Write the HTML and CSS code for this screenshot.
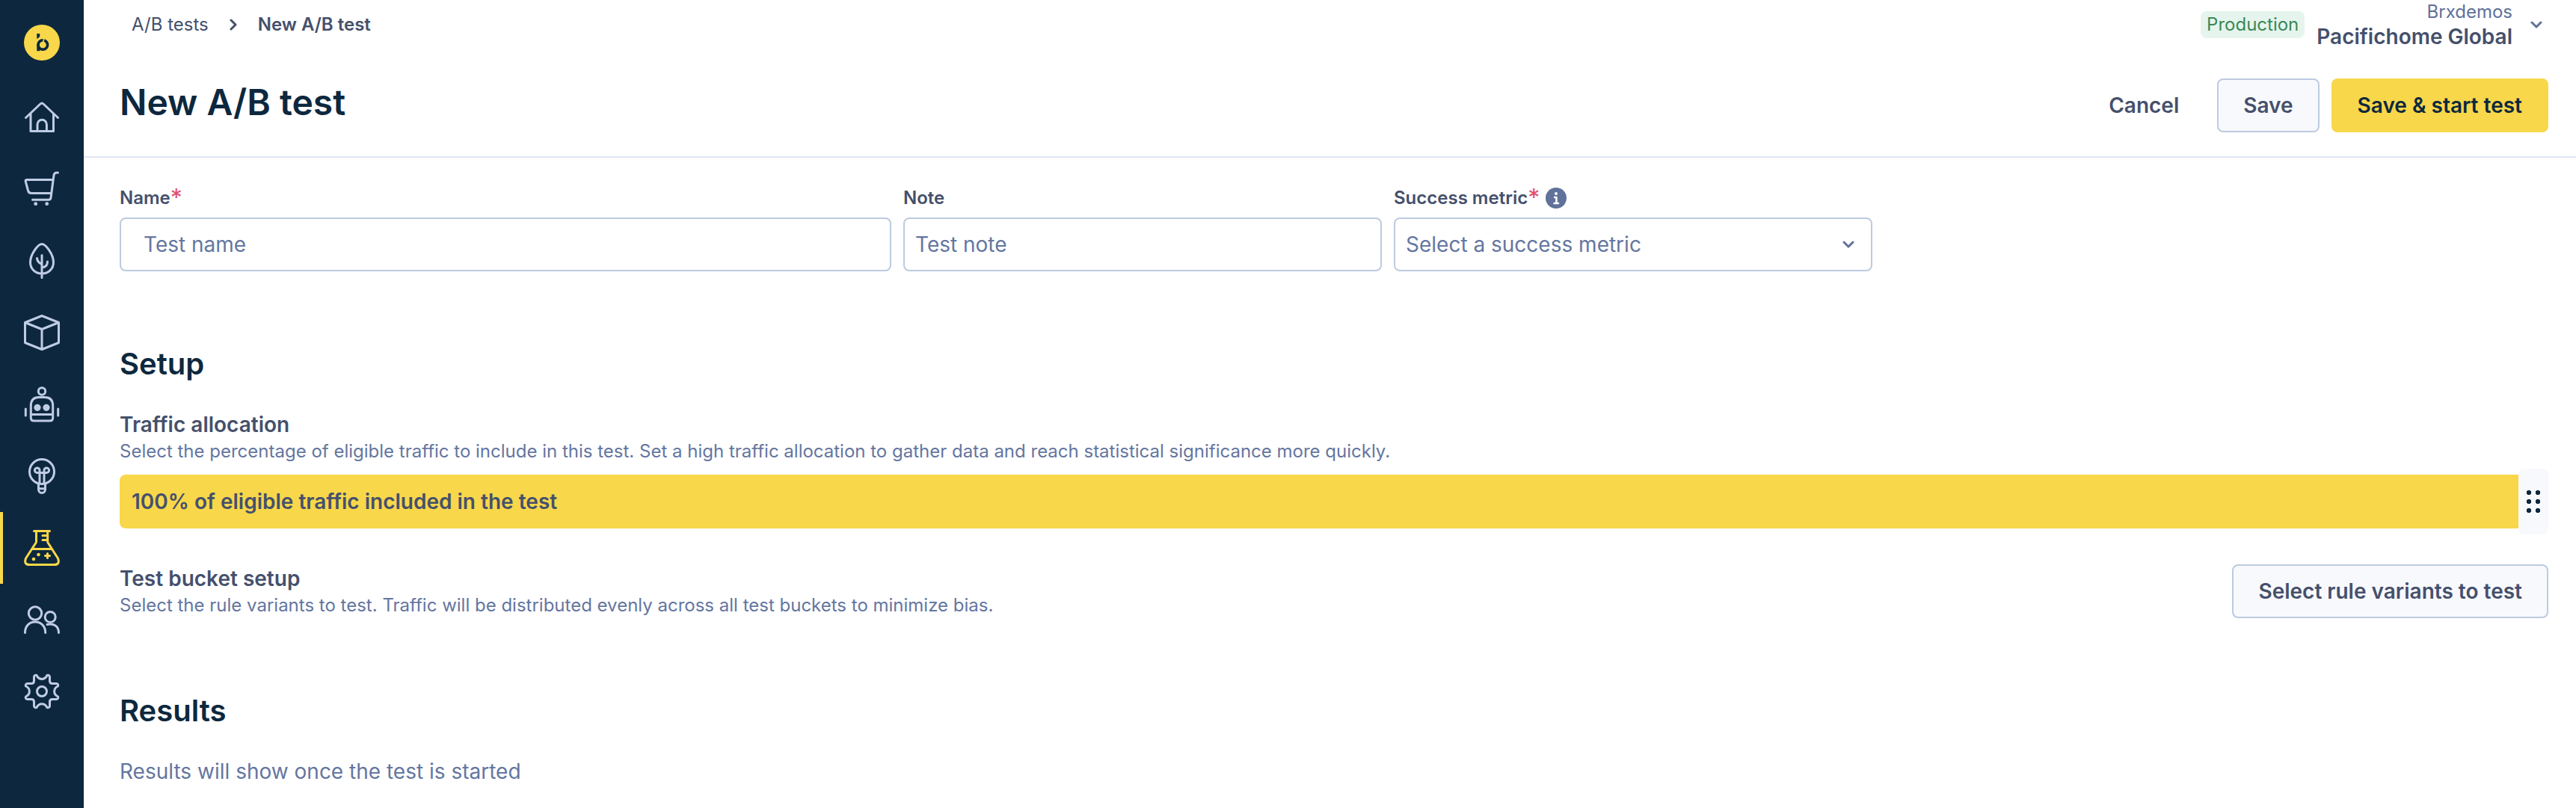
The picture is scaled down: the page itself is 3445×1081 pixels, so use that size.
FILE: index.html
```html
<!DOCTYPE html>
<html lang="en">
<head>
    <meta charset="UTF-8">
    <meta name="viewport" content="width=device-width, initial-scale=1.0">
    <title>New A/B test</title>
    <link rel="stylesheet" href="styles.css">
</head>
<body>

<nav class="sidebar" aria-label="Main">
    <a class="logo" href="#" aria-label="Dashboard">
        <svg viewBox="0 0 48 48">
            <circle cx="24" cy="24" r="24" fill="#f8d74a"/>
            <path d="M17.3 12h3.9v3.2q0 1.8-3.9 3.8z" fill="#0d283e"/>
            <path d="M17.3 27v8.2h3.9V27z" fill="#0d283e"/>
            <circle cx="25.3" cy="27" r="6.2" fill="none" stroke="#0d283e" stroke-width="3.8"/>
            <path d="M25 27l2-9.500" stroke="#f8d74a" stroke-width="1.600"/>
            <circle cx="25.3" cy="27" r="4.3" fill="#f8d74a"/>
        </svg>
    </a>
    <a class="nav-item" href="#" aria-label="Home">
        <svg viewBox="0 0 48 48">
            <path d="M2.500 24.500L22 6q2-2 4 0l19.500 18.500M9 19v23.500h30.500V19M18 42V33.500a6.200 6.200 0 0 1 12.400 0V42"/>
        </svg>
    </a>
    <a class="nav-item" href="#" aria-label="Commerce">
        <svg viewBox="0 0 48 48">
            <path d="M45.500 2h-1.500q-3.500 0-4 3.500L36 35.500q-.4 2.800-3 2.800H11.500M39 11.500H4q-2.200 0-1.800 2.200L5.500 26q1 3.500 4.500 3.500h26"/>
            <circle class="dot" cx="15.700" cy="43.700" r="2.400"/>
            <circle class="dot" cx="30.700" cy="43.700" r="2.400"/>
        </svg>
    </a>
    <a class="nav-item" href="#" aria-label="Discover">
        <svg viewBox="0 0 48 48">
            <path d="M24 1.500C19 1.500 8.500 15 8.500 26c0 9 7 15 15.500 15s15.500-6 15.500-15C39.500 15 29 1.500 24 1.500zM24 16.500v30M17.500 20.500q.5 5.500 6.500 8M31.500 25q0 7-7.500 8"/>
        </svg>
    </a>
    <a class="nav-item" href="#" aria-label="Products">
        <svg viewBox="0 0 48 48">
            <path d="M24 1.500l22.500 9v27l-22.500 9-22.500-9v-27zM1.500 10.500l22.500 9 22.500-9M24 19.500v27"/>
        </svg>
    </a>
    <a class="nav-item" href="#" aria-label="Assistant">
        <svg viewBox="0 0 48 48">
            <circle cx="24" cy="6.500" r="4.700"/>
            <path d="M20 14.500h8q10.700 0 10.700 11.500v16q0 4-4 4H13.300q-4 0-4-4V26q0-11.500 10.700-11.500zM9.300 37.500h29.400M2.300 30v9M45.700 30v9"/>
            <circle class="dot" cx="18" cy="28.300" r="4.600"/>
            <circle class="dot" cx="30" cy="28.300" r="4.600"/>
        </svg>
    </a>
    <a class="nav-item" href="#" aria-label="Insights">
        <svg viewBox="0 0 48 48">
            <circle cx="24" cy="18" r="16.500"/>
            <path d="M21 19.500h-3a3.300 3.300 0 1 1 3-3.300V34M27 34V16.200a3.300 3.300 0 1 1 3 3.300h-9M19.500 34v8a4.500 4.500 0 0 0 9 0v-8M19.500 40.800h9"/>
        </svg>
    </a>
    <a class="nav-item active" href="#" aria-label="A/B tests">
        <svg viewBox="0 0 48 48">
            <path d="M13.500 1.500h21M16.500 1.500v14q0 1.500-1 2.500L2.500 38q-3 8.500 5 8.500h33q8 0 5-8.500L32.700 18q-1-1-1-2.500v-14M11 25.500h26M25 7.500h6.500M25 13.500h6.500M31.500 31.500v6M28.500 34.500h6"/>
            <circle class="dot" cx="19.500" cy="33" r="2.300"/>
            <circle class="dot" cx="13" cy="39" r="2.300"/>
        </svg>
    </a>
    <a class="nav-item" href="#" aria-label="Audience">
        <svg viewBox="0 0 48 48">
            <circle cx="15" cy="15.500" r="8.700"/>
            <path d="M1.500 41.500C1.500 32 8 27 15 27s13.700 5 13.700 14.500M31 30.500c9-2 15.500 2.500 15.500 11"/>
            <circle cx="35.200" cy="20.500" r="7"/>
        </svg>
    </a>
    <a class="nav-item" href="#" aria-label="Settings">
        <svg viewBox="0 0 48 48">
            <path d="M13.500 4.500Q14 1.500 17 2.500C20 9 28 9 31 2.500q3-1 3.500 2V10q0 3.500 3.500 3.500h5.500q3 .5 2 3.500c-6.500 3-6.500 11 0 14q1 3-2 3.500H38q-3.500 0-3.500 3.500v5.500q-.5 3-3.500 2c-3-6.500-11-6.500-14 0q-3 1-3.500-2V38q0-3.500-3.500-3.500H4.500q-3-.5-2-3.500c6.500-3 6.500-11 0-14q-1-3 2-3.500H10q3.500 0 3.500-3.500z"/>
            <circle cx="24" cy="24" r="6.500"/>
        </svg>
    </a>
</nav>

<div class="page">
    <header class="header">
        <div class="topbar">
            <div class="breadcrumb">
                <a href="#">A/B tests</a>
                <svg class="chevron-right" viewBox="0 0 12 16"><path d="M3 2l6 6-6 6"/></svg>
                <span class="current">New A/B test</span>
            </div>
            <div class="account">
                <span class="badge">Production</span>
                <button class="account-switch" type="button">
                    <span class="account-name">
                        <span class="org">Brxdemos</span>
                        <span class="site">Pacifichome Global</span>
                    </span>
                    <svg class="chevron-down" viewBox="0 0 16 12"><path d="M2 3l6 6 6-6"/></svg>
                </button>
            </div>
        </div>
        <div class="title-row">
            <h1>New A/B test</h1>
            <div class="actions">
                <button class="btn btn-text" type="button">Cancel</button>
                <button class="btn" type="button">Save</button>
                <button class="btn btn-primary" type="button">Save &amp; start test</button>
            </div>
        </div>
    </header>

    <main class="content">
        <form class="details">
            <div class="field">
                <div class="field-label">
                    <label for="test-name">Name</label><span class="required">*</span>
                </div>
                <input class="wide-pad" type="text" id="test-name" placeholder="Test name">
            </div>
            <div class="field">
                <div class="field-label">
                    <label for="test-note">Note</label>
                </div>
                <input type="text" id="test-note" placeholder="Test note">
            </div>
            <div class="field">
                <div class="field-label">
                    <label for="metric">Success metric</label><span class="required">*</span>
                    <svg class="info" viewBox="0 0 28 28">
                        <circle cx="14" cy="14" r="14" fill="#60719a"/>
                        <circle cx="14" cy="8" r="2" fill="#fff"/>
                        <path d="M12 13h2.500v8M11.500 21h5.500" fill="none" stroke="#fff" stroke-width="2.500" stroke-linecap="round" stroke-linejoin="round"/>
                    </svg>
                </div>
                <div class="select">
                    <select id="metric">
                        <option>Select a success metric</option>
                    </select>
                    <svg class="chevron-down" viewBox="0 0 16 12"><path d="M2 3l6 6 6-6"/></svg>
                </div>
            </div>
        </form>

        <section>
            <h2>Setup</h2>
            <h3><label for="allocation">Traffic allocation</label></h3>
            <p class="hint">Select the percentage of eligible traffic to include in this test. Set a high traffic allocation to gather data and reach statistical significance more quickly.</p>
            <div class="allocation" id="allocation-bar">
                <input type="range" id="allocation" min="0" max="100" value="100" oninput="updateAllocation()">
                <span class="allocation-text"><span id="allocation-value">100</span>% of eligible traffic included in the test</span>
            </div>
            <div class="bucket">
                <div>
                    <h3>Test bucket setup</h3>
                    <p class="hint">Select the rule variants to test. Traffic will be distributed evenly across all test buckets to minimize bias.</p>
                </div>
                <button class="btn" type="button">Select rule variants to test</button>
            </div>
        </section>

        <section>
            <h2>Results</h2>
            <p class="empty">Results will show once the test is started</p>
        </section>
    </main>
</div>

<script>
    function updateAllocation() {
        const value = document.getElementById('allocation').value;
        document.getElementById('allocation-value').innerText = value;
        document.getElementById('allocation-bar').style.setProperty('--fill', value + '%');
    }
</script>

</body>
</html>
```

FILE: styles.css
```css
* {
    box-sizing: border-box;
}
body {
    margin: 0;
    min-height: 100vh;
    display: flex;
    background: #fff;
    color: #45506c;
    font-family: Inter, "Liberation Sans", sans-serif;
    font-size: 28px;
    line-height: 34px;
}
h1, h2, h3, p {
    margin: 0;
}
a {
    color: inherit;
    text-decoration: none;
}
button, input, select {
    font: inherit;
    color: inherit;
}
svg {
    display: block;
    flex: none;
}

/* Sidebar */
.sidebar {
    flex: none;
    width: 112px;
    background: #0d283e;
}
.sidebar svg {
    width: 48px;
    height: 48px;
}
.logo {
    display: flex;
    justify-content: center;
    padding: 33px 0 28px;
}
.nav-item {
    display: flex;
    align-items: center;
    justify-content: center;
    height: 96px;
    color: #bfcce3;
}
.nav-item svg {
    fill: none;
    stroke: currentColor;
    stroke-width: 3;
    stroke-linecap: round;
    stroke-linejoin: round;
}
.nav-item .dot {
    fill: currentColor;
    stroke: none;
}
.nav-item.active {
    color: #f8d74a;
    box-shadow: inset 4px 0 #f8d74a;
}

/* Header */
.page {
    flex: 1;
    min-width: 0;
}
.header {
    padding: 0 37px 32px 48px;
    border-bottom: 2px solid #e1e6f2;
}
.topbar {
    display: flex;
    align-items: center;
    justify-content: space-between;
    padding-left: 16px;
}
.breadcrumb {
    display: flex;
    align-items: center;
    font-size: 24px;
}
.breadcrumb .current {
    font-weight: 600;
}
.chevron-right {
    width: 12px;
    height: 16px;
    margin: 0 27px;
}
.chevron-down {
    width: 16px;
    height: 12px;
}
.chevron-right, .chevron-down {
    fill: none;
    stroke: #60719a;
    stroke-width: 3;
    stroke-linecap: round;
    stroke-linejoin: round;
}
.chevron-right {
    stroke: #45506c;
}
.account {
    display: flex;
    align-items: center;
    gap: 16px;
}
.badge {
    padding: 0 8px;
    border-radius: 8px;
    background: #e5f5ed;
    color: #3b8757;
    font-size: 24px;
    line-height: 36px;
}
.account-switch {
    display: flex;
    align-items: center;
    gap: 24px;
    padding: 0 8px 0 0;
    border: none;
    background: none;
    text-align: right;
    cursor: pointer;
}
.account-name {
    display: flex;
    flex-direction: column;
}
.org {
    color: #60719a;
    font-size: 24px;
    line-height: 32px;
}
.site {
    font-weight: 600;
}
.title-row {
    display: flex;
    justify-content: space-between;
    margin-top: 39px;
}
h1 {
    color: #0d283e;
    font-size: 48px;
    line-height: 64px;
    font-weight: 600;
}
.actions {
    display: flex;
    gap: 16px;
}
.btn {
    flex: none;
    height: 72px;
    padding: 0 33px;
    border: 2px solid #bccbe0;
    border-radius: 8px;
    background: #f8f9fd;
    font-weight: 600;
    cursor: pointer;
}
.btn-text {
    border-color: transparent;
    background: none;
}
.btn-primary {
    border-color: #f8d74a;
    background: #f8d74a;
    color: #0d283e;
}

/* Content */
.content {
    padding: 36px 37px 32px 48px;
}
.details {
    display: grid;
    grid-template-columns: 1032fr 640fr 640fr;
    gap: 16px;
    max-width: 2344px;
}
.field-label {
    display: flex;
    align-items: center;
    height: 36px;
    margin-bottom: 8px;
    font-size: 24px;
    font-weight: 600;
}
.required {
    color: #e0506e;
    font-size: 32px;
    font-weight: 400;
}
.info {
    width: 28px;
    height: 28px;
    margin-left: 8px;
}
.field input, .field select {
    display: block;
    width: 100%;
    height: 72px;
    padding: 0 14px;
    border: 2px solid #bccbe0;
    border-radius: 8px;
    background: #fff;
    color: #6476a0;
}
.field input.wide-pad {
    padding: 0 30px;
}
.field input::placeholder {
    color: #6476a0;
    opacity: 1;
}
.select {
    position: relative;
}
.select select {
    appearance: none;
}
.select .chevron-down {
    position: absolute;
    top: 30px;
    right: 24px;
    pointer-events: none;
}
h2 {
    margin: 100px 0 40px;
    color: #0d283e;
    font-size: 40px;
    line-height: 48px;
    font-weight: 600;
}
h3 {
    font-size: 28px;
    font-weight: 600;
}
.hint {
    margin-top: 2px;
    color: #6476a0;
    font-size: 24px;
}
.empty {
    color: #6476a0;
}

/* Traffic slider */
.allocation {
    --fill: 100%;
    position: relative;
    margin: 6px 0 40px;
}
.allocation input {
    appearance: none;
    display: block;
    width: 100%;
    height: 88px;
    margin: 0;
    background: none;
    cursor: pointer;
}
.allocation input::-webkit-slider-runnable-track {
    height: 72px;
    border-radius: 8px;
    background: linear-gradient(to right, #f8d74a var(--fill), #e1e6f2 var(--fill));
}
.allocation input::-webkit-slider-thumb {
    appearance: none;
    width: 40px;
    height: 88px;
    margin-top: -8px;
    border-radius: 8px;
    background: radial-gradient(circle, #0d283e 3px, transparent 3px) 8px 26px / 12px 12px no-repeat,
        radial-gradient(circle, #0d283e 3px, transparent 3px) 20px 26px / 12px 12px no-repeat,
        radial-gradient(circle, #0d283e 3px, transparent 3px) 8px 38px / 12px 12px no-repeat,
        radial-gradient(circle, #0d283e 3px, transparent 3px) 20px 38px / 12px 12px no-repeat,
        radial-gradient(circle, #0d283e 3px, transparent 3px) 8px 50px / 12px 12px no-repeat,
        radial-gradient(circle, #0d283e 3px, transparent 3px) 20px 50px / 12px 12px no-repeat,
        #f8f9fd;
}
.allocation-text {
    position: absolute;
    top: 8px;
    left: 16px;
    line-height: 72px;
    font-weight: 600;
    pointer-events: none;
}
.bucket {
    display: flex;
    align-items: flex-end;
    justify-content: space-between;
    gap: 32px;
}
```
